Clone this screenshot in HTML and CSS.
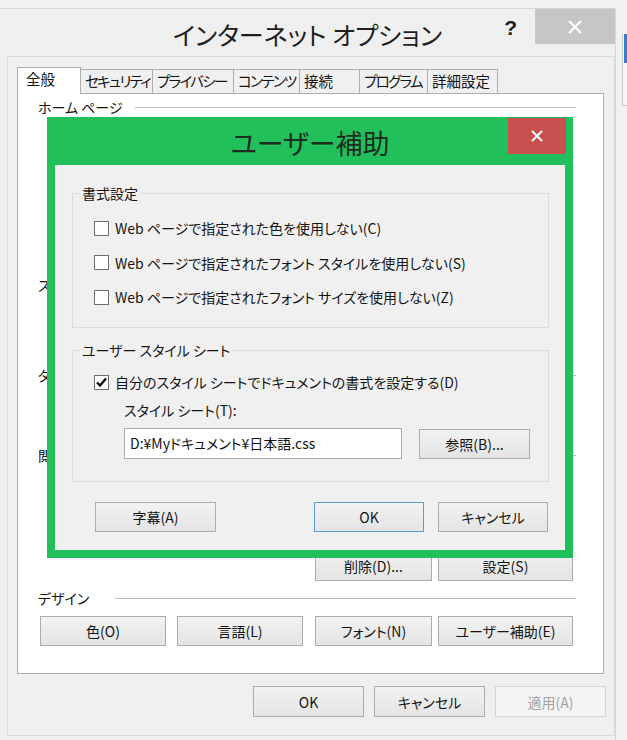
FILE: index.html
```html
<!DOCTYPE html>
<html lang="ja">
<head>
  <meta charset="UTF-8" />
  <title>インターネット オプション</title>
  <link rel="stylesheet" href="styles.css">
</head>
<body>
  <div class="window">
    <div class="titlebar">
      <div></div>
      <h1 class="title">インターネット オプション</h1>
      <div class="caption-buttons">
        <span class="help">?</span>
        <span class="close-button">
          <svg width="16" height="16" viewBox="0 0 16 16"><path d="M2 2 L14 14 M14 2 L2 14" stroke="#fff" stroke-width="2.2" fill="none"/></svg>
        </span>
      </div>
    </div>

    <div class="client">
      <div class="tabs">
        <div class="tab selected">全般</div>
        <div class="tab kana">セキュリティ</div>
        <div class="tab kana">プライバシー</div>
        <div class="tab kana">コンテンツ</div>
        <div class="tab">接続</div>
        <div class="tab kana">プログラム</div>
        <div class="tab">詳細設定</div>
      </div>

      <div class="tab-panel">
        <div class="section home">
          <div class="section-head"><span>ホーム ページ</span><i class="rule"></i></div>
        </div>
        <div class="section startup">
          <div class="section-head"><span>スタートアップ</span></div>
        </div>
        <div class="section tab-settings">
          <div class="section-head"><span>タブ</span><i class="rule"></i></div>
        </div>
        <div class="section history">
          <div class="section-head"><span>閲覧の履歴</span><i class="rule"></i></div>
          <div class="button-row history-buttons">
            <button class="btn btn-font">削除(D)...</button>
            <button class="btn btn-access">設定(S)</button>
          </div>
        </div>
        <div class="section design">
          <div class="section-head"><span>デザイン</span><i class="rule"></i></div>
          <div class="button-row">
            <button class="btn btn-color">色(O)</button>
            <button class="btn btn-lang">言語(L)</button>
            <button class="btn btn-font">フォント(N)</button>
            <button class="btn btn-access">ユーザー補助(E)</button>
          </div>
        </div>
      </div>

      <div class="footer-buttons">
        <button class="btn">OK</button>
        <button class="btn">キャンセル</button>
        <button class="btn disabled">適用(A)</button>
      </div>
    </div>
  </div>

  <div class="behind-window"><div class="behind-accent"></div></div>

  <div class="modal">
    <div class="modal-titlebar">
      <div></div>
      <h2 class="modal-title">ユーザー補助</h2>
      <div class="modal-caption">
        <span class="modal-close">
          <svg width="14" height="14" viewBox="0 0 14 14"><path d="M2 2 L12 12 M12 2 L2 12" stroke="#fff" stroke-width="2" fill="none"/></svg>
        </span>
      </div>
    </div>
    <div class="modal-body">
      <fieldset class="group format-group">
        <legend>書式設定</legend>
        <label class="check-row"><span class="box"></span>Web ページで指定された色を使用しない(C)</label>
        <label class="check-row"><span class="box"></span>Web ページで指定されたフォント スタイルを使用しない(S)</label>
        <label class="check-row"><span class="box"></span>Web ページで指定されたフォント サイズを使用しない(Z)</label>
      </fieldset>

      <fieldset class="group style-group">
        <legend>ユーザー スタイル シート</legend>
        <label class="check-row">
          <span class="box"><svg width="13" height="13" viewBox="0 0 13 13"><path d="M2 6.5 L5 9.5 L11 2.5" stroke="#111" stroke-width="2.4" fill="none"/></svg></span>
          自分のスタイル シートでドキュメントの書式を設定する(D)
        </label>
        <div class="sheet-label">スタイル シート(T):</div>
        <div class="sheet-row">
          <div class="textbox">D:¥Myドキュメント¥日本語.css</div>
          <button class="btn btn-browse">参照(B)...</button>
        </div>
      </fieldset>

      <div class="modal-buttons">
        <button class="btn btn-caption">字幕(A)</button>
        <button class="btn btn-default">OK</button>
        <button class="btn btn-cancel">キャンセル</button>
      </div>
    </div>
  </div>
</body>
</html>
```

FILE: styles.css
```css
body {
  margin: 0;
  height: 740px;
  overflow: hidden;
  background: #f1f1f1;
  font-family: "Noto Sans CJK JP", sans-serif;
  font-feature-settings: "palt";
  font-size: 14px;
  color: #141414;
}

.window {
  margin-top: 8px;
  width: 615px;
  height: 732px;
  border-top: 1px solid #d6d6d6;
  border-right: 1px solid #d6d6d6;
  background: #efefef;
}

.titlebar {
  display: grid;
  grid-template-columns: 1fr auto 1fr;
  height: 47px;
}

.title {
  margin: 11px 0 0;
  font-size: 25px;
  font-weight: normal;
  line-height: 28px;
  color: #1e1e1e;
}

.caption-buttons {
  display: flex;
  justify-content: flex-end;
  align-items: flex-start;
}

.help {
  margin: 8px 18px 0 0;
  font-family: "Liberation Sans", sans-serif;
  font-weight: bold;
  font-size: 21px;
  line-height: 22px;
  color: #222;
}

.close-button {
  display: flex;
  align-items: center;
  justify-content: center;
  width: 80px;
  height: 35px;
  background: #c6c6c6;
}

.client {
  margin-left: 7px;
  width: 608px;
  height: 680px;
  box-sizing: border-box;
  border: 1px solid #dadada;
  padding: 10px 8px 0 9px;
}

.tabs {
  display: flex;
  align-items: flex-end;
  height: 26px;
}

.tab {
  box-sizing: border-box;
  height: 24px;
  padding-left: 4px;
  border: 1px solid #adadad;
  border-bottom: 0;
  margin-left: -1px;
  background: #f0f0f0;
  font-size: 14.5px;
  line-height: 21px;
  white-space: nowrap;
}

.tab.kana {
  letter-spacing: -1.7px;
}

.tab.selected {
  position: relative;
  z-index: 1;
  height: 27px;
  margin-left: 0;
  margin-bottom: -1px;
  padding-left: 8px;
  background: #fff;
}

.tab:nth-child(1) { width: 64px; }
.tab:nth-child(2) { width: 73px; }
.tab:nth-child(3) { width: 82px; }
.tab:nth-child(4) { width: 67px; }
.tab:nth-child(5) { width: 61px; }
.tab:nth-child(6) { width: 69px; }
.tab:nth-child(7) { width: 71px; }

.tab-panel {
  box-sizing: border-box;
  width: 587px;
  height: 581px;
  border: 1px solid #acacac;
  background: #fff;
  padding: 3px 27px 0 20px;
}

.section-head {
  display: flex;
  align-items: center;
  gap: 12px;
  height: 20px;
  line-height: 20px;
}

.rule {
  flex: 1;
  height: 1px;
  background: #bdbdbd;
}

.design .section-head {
  gap: 26px;
}

.home { height: 178px; }
.startup { height: 90px; }
.tab-settings { height: 80px; }
.history { height: 143px; }

.button-row {
  display: flex;
  padding-left: 2px;
  margin-top: 8px;
}

.history-buttons {
  margin-top: 86px;
  padding-left: 277px;
}

.btn {
  box-sizing: border-box;
  height: 30px;
  padding: 0;
  border: 1px solid #acacac;
  background: linear-gradient(#f2f2f2, #e4e4e4);
  font-family: inherit;
  font-feature-settings: "palt";
  font-size: 14px;
  color: #141414;
  white-space: nowrap;
}

.btn-color { width: 126px; }
.btn-lang { width: 126px; margin-left: 11px; }
.btn-font { width: 117px; margin-left: 12px; }
.btn-access { width: 135px; margin-left: 6px; }
.history-buttons .btn-font { margin-left: 0; }

.footer-buttons {
  display: flex;
  justify-content: flex-end;
  gap: 10px;
  margin-top: 12px;
}

.footer-buttons .btn {
  width: 111px;
  height: 31px;
}

.btn.disabled {
  border-color: #d5d5d5;
  background: #f4f4f4;
  color: #a3a3a3;
}

.behind-window {
  position: absolute;
  left: 622px;
  top: 34px;
  width: 8px;
  height: 71px;
  border-left: 1px solid #cbcbcb;
  border-bottom: 1px solid #c4c4c4;
  background: #f7f7f7;
}

.behind-accent {
  height: 29px;
  margin-left: 1px;
  background: #2f7fd6;
}

/* accessibility dialog on top */
.modal {
  position: absolute;
  left: 47px;
  top: 117px;
  width: 526px;
  height: 441px;
  box-sizing: border-box;
  padding: 0 8px 8px;
  background: #22c05a;
}

.modal-titlebar {
  display: grid;
  grid-template-columns: 1fr auto 1fr;
  height: 48px;
}

.modal-title {
  margin: 12px 0 0;
  font-size: 27px;
  font-weight: normal;
  line-height: 28px;
  color: #1c2c22;
}

.modal-caption {
  display: flex;
  justify-content: flex-end;
  align-items: flex-start;
}

.modal-close {
  display: flex;
  align-items: center;
  justify-content: center;
  width: 58px;
  height: 36px;
  margin: 1px -1px 0 0;
  background: #c9504f;
}

.modal-body {
  height: 385px;
  box-sizing: border-box;
  padding: 18px 16px 0 17px;
  background: #f0f0f0;
}

.group {
  margin: 0;
  min-width: 0;
  border: 1px solid #dcdcdc;
  padding: 15px 0 20px 0;
}

.group legend {
  margin-left: 7px;
  padding: 0 2px;
  line-height: 20px;
}

.check-row {
  display: flex;
  align-items: center;
  gap: 6px;
  height: 20px;
  margin-left: 21px;
  white-space: nowrap;
}

.check-row + .check-row {
  margin-top: 14.5px;
}

.box {
  box-sizing: border-box;
  display: flex;
  align-items: center;
  justify-content: center;
  width: 15px;
  height: 15px;
  border: 1px solid #6f6f6f;
  background: #fff;
}

.style-group {
  margin-top: 12px;
  padding-top: 12px;
  padding-bottom: 22px;
}

.sheet-label {
  margin: 8px 0 0 51px;
  line-height: 20px;
}

.sheet-row {
  display: flex;
  align-items: center;
  gap: 17px;
  margin: 8px 0 0 51px;
}

.textbox {
  box-sizing: border-box;
  width: 278px;
  height: 31px;
  padding-left: 5px;
  border: 1px solid #abadb3;
  background: #fff;
  line-height: 29px;
}

.btn-browse { width: 111px; }

.modal-buttons {
  display: flex;
  margin-top: 20px;
}

.btn-caption { width: 121px; margin-left: 23px; }
.btn-default { width: 110px; margin-left: auto; border-color: #5a9bd6; }
.btn-cancel { width: 110px; margin-left: 14px; margin-right: 1px; }
```
